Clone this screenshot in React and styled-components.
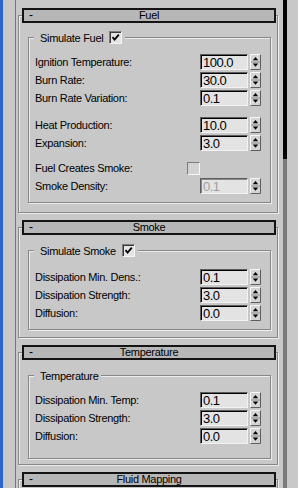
import React from 'react';
import styled, { createGlobalStyle } from 'styled-components';

// 3ds Max 스타일 롤아웃 패널 (Fuel / Smoke / Temperature / Fluid Mapping)

const GlobalStyle = createGlobalStyle`
  html, body {
    margin: 0;
    padding: 0;
    background: #c8c8c8;
  }
  body {
    font-family: "Liberation Sans", Arial, sans-serif;
    color: #000;
  }
`;

const Screen = styled.div`
  display: flex;
  width: 298px;
  height: 488px;
  overflow: hidden;
  background: #c8c8c8;
`;

const BlueEdge = styled.div`
  width: 3px;
  flex-shrink: 0;
  background: #2c64d0;
`;

const Gutter = styled.div`
  width: 12px;
  flex-shrink: 0;
`;

// 왼쪽 세로줄 + 롤아웃들이 쌓이는 영역
const Panel = styled.div`
  width: 267px;
  flex-shrink: 0;
  box-sizing: border-box;
  border-left: 1px solid #767676;
  padding: 15px 0 0 2px;
`;

const ScrollTrack = styled.div`
  width: 4px;
  flex-shrink: 0;
  margin-left: 1px;
  background: #7a7a7a;
`;

const ScrollThumb = styled.div`
  height: 159px;
  background: #050505;
`;

// 롤아웃 테두리 (etched)
const Rollout = styled.section`
  width: 260px;
  box-sizing: border-box;
  border: 1px solid #878787;
  box-shadow: inset 1px 1px 0 #ececec, 1px 1px 0 #ececec;
  margin-bottom: 14px;
  padding-bottom: ${({ $padBottom }) => $padBottom}px;
`;

const RollHeader = styled.div`
  display: grid;
  grid-template-columns: 20px 1fr 20px;
  align-items: center;
  width: 254px;
  height: 15px;
  box-sizing: border-box;
  margin: -8px 0 0 3px;
  border: 2px solid #141414;
  background: #b7b7b7;
  font-size: 11px;
  line-height: 11px;
  letter-spacing: -0.3px;
`;

const Dash = styled.span`
  padding-left: 5px;
  font-size: 12px;
`;

const RollTitle = styled.span`
  text-align: center;
  white-space: nowrap;
`;

const Group = styled.fieldset`
  width: 243px;
  box-sizing: border-box;
  min-inline-size: 0;
  margin: 9px 0 0 9px;
  margin-top: ${({ $top }) => $top}px;
  padding: ${({ $padTop }) => $padTop}px 9px ${({ $padBottom }) => $padBottom}px 6px;
  border: 1px solid #878787;
  box-shadow: inset 1px 1px 0 #ececec, 1px 1px 0 #ececec;
`;

const Legend = styled.legend`
  display: flex;
  align-items: center;
  gap: 6px;
  height: 13px;
  margin-left: -1px;
  padding: 0 3px 0 6px;
  background: #c8c8c8;
  font-size: 11px;
  letter-spacing: -0.3px;
  white-space: nowrap;
`;

const Row = styled.div`
  display: flex;
  align-items: center;
  height: 18px;
  margin-top: ${({ $gap }) => $gap || 0}px;
`;

const Label = styled.span`
  flex: 1;
  font-size: 11px;
  letter-spacing: -0.3px;
  white-space: nowrap;
`;

const Field = styled.div`
  width: 48px;
  height: 16px;
  box-sizing: border-box;
  margin-right: 2px;
  padding-left: 2px;
  border-top: 1px solid #5c5c5c;
  border-left: 1px solid #5c5c5c;
  border-bottom: 1px solid #f2f2f2;
  border-right: 1px solid #f2f2f2;
  background: #e3e3e3;
  font-size: 13px;
  line-height: 15px;
  letter-spacing: -0.5px;
  color: ${({ $disabled }) => ($disabled ? '#a0a0a0' : '#000')};
  box-shadow: ${({ $disabled }) => ($disabled ? 'inset 1px 1px 0 #8a8a8a' : 'inset 1px 1px 0 #000')};
`;

const Blank = styled.div`
  width: 61px;
`;

const Check = styled.span`
  display: inline-flex;
  align-items: center;
  justify-content: center;
  width: 13px;
  height: 13px;
  box-sizing: border-box;
  flex-shrink: 0;
  border-top: 1px solid #7c7c7c;
  border-left: 1px solid #7c7c7c;
  border-bottom: 1px solid #f6f6f6;
  border-right: 1px solid #f6f6f6;
  box-shadow: ${({ $on }) => ($on ? 'inset 1px 1px 0 #3a3a3a' : 'none')};
  background: ${({ $on }) => ($on ? '#e4e4e4' : '#d2d2d2')};
`;

function CheckBox({ on }) {
  return (
    <Check $on={on}>
      {on && (
        <svg width="9" height="9" viewBox="0 0 9 9">
          <path d="M1.5 4.2 L3.6 6.6 L7.8 1.6" stroke="#000" strokeWidth="1.8" fill="none" />
        </svg>
      )}
    </Check>
  );
}

function Spinner() {
  return (
    <svg width="11" height="16" viewBox="0 0 11 16" style={{ display: 'block', flexShrink: 0 }}>
      <rect x="0" y="0" width="11" height="16" fill="#d4d4d4" />
      <path d="M0.5 15.5V0.5H10.5" stroke="#f8f8f8" fill="none" />
      <path d="M0.5 15.5H10.5V0.5" stroke="#5e5e5e" fill="none" />
      <line x1="1" y1="8" x2="10" y2="8" stroke="#8c8c8c" />
      <path d="M5.5 3 L8.2 6.2 H2.8 Z" fill="#000" />
      <path d="M2.8 9.6 H8.2 L5.5 12.8 Z" fill="#000" />
    </svg>
  );
}

function NumRow({ label, value, gap, disabled }) {
  return (
    <Row $gap={gap}>
      <Label>{label}</Label>
      <Field $disabled={disabled}>{value}</Field>
      <Spinner />
    </Row>
  );
}

const sections = [
  {
    title: 'Smoke',
    legend: 'Simulate Smoke',
    check: true,
    padTop: 11,
    padBottom: 7,
    frameBottom: 7,
    rows: [
      { label: 'Dissipation Min. Dens.:', value: '0.1' },
      { label: 'Dissipation Strength:', value: '3.0' },
      { label: 'Diffusion:', value: '0.0' },
    ],
  },
  {
    title: 'Temperature',
    legend: 'Temperature',
    check: false,
    padTop: 9,
    padBottom: 13,
    frameBottom: 5,
    rows: [
      { label: 'Dissipation Min. Temp:', value: '0.1' },
      { label: 'Dissipation Strength:', value: '3.0' },
      { label: 'Diffusion:', value: '0.0' },
    ],
  },
];

function Header({ title }) {
  return (
    <RollHeader>
      <Dash>-</Dash>
      <RollTitle>{title}</RollTitle>
      <span />
    </RollHeader>
  );
}

export default function App() {
  return (
    <>
      <GlobalStyle />
      <Screen>
        <BlueEdge />
        <Gutter />
        <Panel>
          <Rollout $padBottom={9}>
            <Header title="Fuel" />
            <Group $top={8} $padTop={9} $padBottom={7}>
              <Legend>
                Simulate Fuel <CheckBox on />
              </Legend>
              <NumRow label="Ignition Temperature:" value="100.0" />
              <NumRow label="Burn Rate:" value="30.0" />
              <NumRow label="Burn Rate Variation:" value="0.1" />
              <NumRow label="Heat Production:" value="10.0" gap={9} />
              <NumRow label="Expansion:" value="3.0" />
              <Row $gap={7}>
                <Label>Fuel Creates Smoke:</Label>
                <CheckBox on={false} />
                <Blank />
              </Row>
              <NumRow label="Smoke Density:" value="0.1" disabled />
            </Group>
          </Rollout>

          {sections.map((s) => (
            <Rollout key={s.title} $padBottom={s.frameBottom}>
              <Header title={s.title} />
              <Group $top={9} $padTop={s.padTop} $padBottom={s.padBottom}>
                <Legend>
                  {s.legend} {s.check && <CheckBox on />}
                </Legend>
                {s.rows.map((r) => (
                  <NumRow key={r.label} label={r.label} value={r.value} />
                ))}
              </Group>
            </Rollout>
          ))}

          <Rollout $padBottom={60}>
            <Header title="Fluid Mapping" />
          </Rollout>
        </Panel>
        <ScrollTrack>
          <ScrollThumb />
        </ScrollTrack>
      </Screen>
    </>
  );
}
